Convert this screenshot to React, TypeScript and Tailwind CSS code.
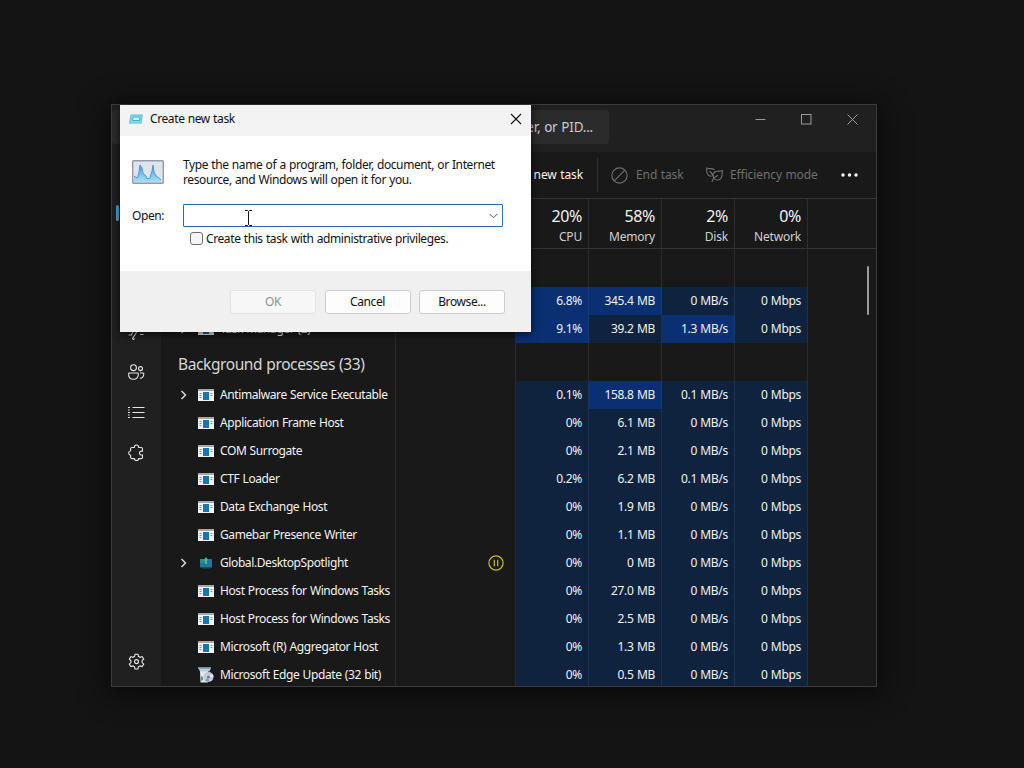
import type { ReactNode } from "react";

type Process = {
  name: string;
  icon?: "window" | "spotlight" | "installer";
  expandable?: boolean;
  suspended?: boolean;
  usage: [string, string, string, string];
  hot?: number[];
};

const apps: Process[] = [
  { name: "", expandable: true, usage: ["6.8%", "345.4 MB", "0 MB/s", "0 Mbps"], hot: [0, 1] },
  { name: "Task Manager (2)", expandable: true, usage: ["9.1%", "39.2 MB", "1.3 MB/s", "0 Mbps"], hot: [0, 2] },
];

const background: Process[] = [
  { name: "Antimalware Service Executable", expandable: true, usage: ["0.1%", "158.8 MB", "0.1 MB/s", "0 Mbps"], hot: [1] },
  { name: "Application Frame Host", usage: ["0%", "6.1 MB", "0 MB/s", "0 Mbps"] },
  { name: "COM Surrogate", usage: ["0%", "2.1 MB", "0 MB/s", "0 Mbps"] },
  { name: "CTF Loader", usage: ["0.2%", "6.2 MB", "0.1 MB/s", "0 Mbps"] },
  { name: "Data Exchange Host", usage: ["0%", "1.9 MB", "0 MB/s", "0 Mbps"] },
  { name: "Gamebar Presence Writer", usage: ["0%", "1.1 MB", "0 MB/s", "0 Mbps"] },
  { name: "Global.DesktopSpotlight", icon: "spotlight", expandable: true, suspended: true, usage: ["0%", "0 MB", "0 MB/s", "0 Mbps"] },
  { name: "Host Process for Windows Tasks", usage: ["0%", "27.0 MB", "0 MB/s", "0 Mbps"] },
  { name: "Host Process for Windows Tasks", usage: ["0%", "2.5 MB", "0 MB/s", "0 Mbps"] },
  { name: "Microsoft (R) Aggregator Host", usage: ["0%", "1.3 MB", "0 MB/s", "0 Mbps"] },
  { name: "Microsoft Edge Update (32 bit)", icon: "installer", usage: ["0%", "0.5 MB", "0 MB/s", "0 Mbps"] },
];

const columns = [
  { total: "20%", label: "CPU" },
  { total: "58%", label: "Memory" },
  { total: "2%", label: "Disk" },
  { total: "0%", label: "Network" },
];

export default function App() {
  return (
    <div className="relative w-[1024px] h-[768px] overflow-hidden bg-[#141414] font-['Noto_Sans',sans-serif] text-[12px] tracking-[-0.4px] [word-spacing:0.5px] text-[#f2f2f2]">
      <TaskManager />
      <NewTaskDialog />
    </div>
  );
}

function TaskManager() {
  return (
    <div className="absolute left-[111px] top-[104px] w-[766px] h-[583px] border border-[#3b3b3b] bg-[#191919] shadow-[0_4px_26px_6px_rgba(0,0,0,0.45)] flex flex-col overflow-hidden">
      <header className="h-[47px] shrink-0 bg-[#202020] flex items-start">
        <div className="w-[497px] h-[34px] mt-[5px] rounded bg-[#2b2b2b] flex items-center justify-end pr-4 text-[13.5px] tracking-[-0.2px] text-[#c9c9c9]">
          Type a name, publisher, or PID...
        </div>
        <div className="flex-1 flex justify-end gap-[35px] pt-[7px] pr-[18px] text-[#9a9a9a]">
          <WindowButton><path d="M0.5 7.5h10" /></WindowButton>
          <WindowButton><rect x="0.5" y="2.5" width="9.5" height="9.5" /></WindowButton>
          <WindowButton><path d="M0.5 2.500l10 10M10.500 2.500l-10 10" /></WindowButton>
        </div>
      </header>

      <div className="flex flex-1 min-h-0">
        <Sidebar />
        <main className="flex-1 min-w-0 flex flex-col">
          <Toolbar />
          <div className="h-[50px] shrink-0 flex border-b border-[#333333]">
            <div className="w-[235px] border-r border-[#2b2b2b]" />
            <div className="w-[120px] border-r border-[#2b2b2b]" />
            {columns.map((column) => (
              <div key={column.label} className="w-[73px] pr-1.5 pt-[7px] border-r border-[#2e2e2e] flex flex-col items-end">
                <span className="text-[16px] leading-[21px] tracking-[-0.4px]">{column.total}</span>
                <span className="leading-[20px] tracking-[-0.2px] text-[#cfcfcf]">{column.label}</span>
              </div>
            ))}
          </div>

          <div className="relative flex-1 overflow-hidden">
            <GroupRow title="Apps (2)" />
            {apps.map((process, i) => <ProcessRow key={i} process={process} />)}
            <GroupRow title="Background processes (33)" />
            {background.map((process, i) => <ProcessRow key={i} process={process} />)}
            <div className="absolute right-[7px] top-[17px] w-[2px] h-[49px] rounded bg-[#9b9b9b]" />
          </div>
        </main>
      </div>
    </div>
  );
}

function WindowButton({ children }: { children: ReactNode }) {
  return (
    <svg className="w-[11px] h-[13px]" viewBox="0 0 11 13" fill="none" stroke="currentColor">
      {children}
    </svg>
  );
}

function Toolbar() {
  return (
    <div className="h-[47px] shrink-0 flex items-center border-b border-[#333333] text-[12px] tracking-[-0.1px]">
      <div className="w-[437px] h-[34px] pr-[14px] border-r border-[#303030] flex items-center justify-end">Run new task</div>
      <div className="flex items-center gap-2 pl-[13px] w-[95px] text-[#6f6f6f]">
        <svg className="w-[17px] h-[17px] shrink-0" viewBox="0 0 16 16" fill="none" stroke="currentColor" strokeWidth="1.1">
          <circle cx="8" cy="8" r="7.2" />
          <path d="M3 13L13 3" />
        </svg>
        <span className="whitespace-nowrap">End task</span>
      </div>
      <div className="flex items-center gap-[7px] pl-[13px] w-[134px] text-[#6f6f6f]">
        <svg className="w-[17px] h-4 shrink-0" viewBox="0 0 17 16" fill="none" stroke="currentColor" strokeWidth="1.1">
          <path d="M8.500 2.800C6.500.9 3.500 2.300.8 1C.2 5.500 1.500 9.500 5.500 9.300M3.500 4c1.700 1 2.700 3 3.300 5" />
          <path d="M6 15c.8-3.500 3-5.500 6-6.500M8 11.500c-2-4-.5-6.700 2.800-7.200c2.200-.4 3.700.3 5.400-.8c.5 5-.7 9.500-4.800 9.500c-1.500 0-2.700-.5-3.400-1.500z" />
        </svg>
        <span className="whitespace-nowrap">Efficiency mode</span>
      </div>
      <svg className="ml-[14px] w-[17px] h-1" viewBox="0 0 17 4" fill="white">
        <circle cx="2" cy="2" r="1.7" />
        <circle cx="8.5" cy="2" r="1.7" />
        <circle cx="15" cy="2" r="1.7" />
      </svg>
    </div>
  );
}

function Sidebar() {
  return (
    <nav className="w-[49px] shrink-0 bg-[#202020] flex flex-col items-center pr-px text-[#e4e4e4] pt-[53px]">
      <div className="self-start ml-1 w-[3px] h-4 rounded bg-[#4aa3d6]" />
      <div className="h-[99px] shrink-0" />
      <div className="flex-1 flex flex-col items-center gap-[23px] pt-[4px]">
        <SideIcon>
          <path d="M0.500 11h3l3-8M6.500 14.500c-.8 1.600-2.500.8-1.500-.8L10 6M12 10.500h3.500" />
        </SideIcon>
        <SideIcon>
          <circle cx="5.500" cy="3.700" r="2.900" />
          <circle cx="12.500" cy="4.600" r="2" />
          <path d="M1.500 9h8c.6 0 .9.400.9.900c0 3.300-2 5.400-4.900 5.400S.6 13.200.6 9.900c0-.5.3-.9.900-.9zM12 9h3c.5 0 .8.300.8.800c0 2.800-1.500 4.500-4 4.400" />
        </SideIcon>
        <SideIcon>
          <path d="M4.500 3.500h12M4.500 8.500h12M4.500 13.500h12" />
          <path d="M0 3.500h2M0 8.500h2M0 13.500h2M0 6h1.500M0 11h1.500" />
        </SideIcon>
        <SideIcon>
          <path d="M4 3.500h2.300c0-1.500.8-2.500 2.200-2.500s2.200 1 2.200 2.500H13c.9 0 1.500.6 1.500 1.400v2.300c-1.900-.3-3 .5-3 1.900s1.100 2.200 3 1.900v2.200c0 .8-.6 1.400-1.500 1.400h-2.300c0 1.200-.8 2-2.200 2s-2.200-.8-2.200-2H4c-.8 0-1.400-.6-1.400-1.400v-1.900C1.300 11.200.7 10.300.7 9s.6-2.100 1.900-2.300V4.900C2.600 4.100 3.200 3.500 4 3.500z" />
        </SideIcon>
      </div>
      <div className="pb-4">
        <SideIcon>
          <path d="M7 1.200h3l.4 2.100 1.700 1 2.100-.7 1.500 2.500-1.600 1.500v2l1.600 1.500-1.500 2.500-2.100-.7-1.700 1-.4 2.100H7l-.4-2.100-1.700-1-2.100.7-1.500-2.500 1.600-1.500v-2L1.300 6.100l1.500-2.500 2.100.7 1.700-1z" />
          <circle cx="8.500" cy="8.600" r="2" />
        </SideIcon>
      </div>
    </nav>
  );
}

function SideIcon({ children }: { children: ReactNode }) {
  return (
    <svg className="w-[17px] h-[17px]" viewBox="0 0 17 17" fill="none" stroke="currentColor" strokeWidth="1.1">
      {children}
    </svg>
  );
}

function GroupRow({ title }: { title: string }) {
  return (
    <div className="h-[38px] flex">
      <div className="w-[235px] pl-[17px] pt-[11px] border-r border-[#2b2b2b] text-[15.5px] leading-[21px] tracking-[-0.4px] text-[#d6d6d6] whitespace-nowrap">{title}</div>
      <div className="w-[120px] border-r border-[#2b2b2b]" />
      {columns.map((column) => <div key={column.label} className="w-[73px] border-r border-[#2b2b2b]" />)}
    </div>
  );
}

function ProcessRow({ process }: { process: Process }) {
  return (
    <div className="h-[28px] flex">
      <div className="w-[235px] pl-[17px] flex items-center border-r border-[#2b2b2b]">
        <div className="w-[20px] shrink-0">
          {process.expandable && (
            <svg className="w-[11px] h-[10px]" viewBox="0 0 11 10" fill="none" stroke="#d8d8d8" strokeWidth="1.5">
              <path d="M3.500 1l4 4-4 4" />
            </svg>
          )}
        </div>
        <ProcessIcon kind={process.icon ?? "window"} />
        <span className="ml-1.5 whitespace-nowrap">{process.name}</span>
      </div>
      <div className="w-[120px] pr-[11px] border-r border-[#2b2b2b] flex items-center justify-end">
        {process.suspended && (
          <svg className="w-4 h-4" viewBox="0 0 16 16" fill="none" stroke="#c9bd1c" strokeWidth="1.2">
            <circle cx="8" cy="8" r="7.100" />
            <path d="M6.300 4.800v6.400M9.700 4.800v6.400" />
          </svg>
        )}
      </div>
      {process.usage.map((value, i) => (
        <div
          key={i}
          className={`w-[73px] pr-1.5 flex items-center justify-end border-r tracking-[-0.3px] ${
            process.hot?.includes(i) ? "bg-[#0a2f72] border-[#173a72]" : "bg-[#10233e] border-[#213149]"
          }`}
        >
          {value}
        </div>
      ))}
    </div>
  );
}

function ProcessIcon({ kind }: { kind: "window" | "spotlight" | "installer" }) {
  if (kind === "spotlight") {
    return (
      <svg className="w-4 h-4 shrink-0" viewBox="0 0 16 16">
        <rect x="2" y="4" width="12" height="8.500" rx="0.500" fill="#1f7899" />
        <path d="M2 4h5v4H2z" fill="#2a8a97" />
        <path d="M4 12.500h8v1H4z" fill="#14536f" />
        <path d="M8 2l2.500 3.500H9V9H7V5.500H5.500z" fill="#3cc08f" />
      </svg>
    );
  }
  if (kind === "installer") {
    return (
      <svg className="w-4 h-4 shrink-0" viewBox="0 0 16 16">
        <path d="M2 4h8v11.500H2.500z" fill="#e0e8ea" />
        <path d="M0 0.500h13l-1.500 4H2z" fill="#b9ced9" />
        <path d="M0 0.500h13v1.500H0z" fill="#8ba7b5" />
        <path d="M3 9l2 1v3l-2 1z" fill="#5aa865" />
        <circle cx="10.500" cy="10" r="5" fill="#c3c8dc" />
        <path d="M10.500 10l-3.500 3.500a5 5 0 0 0 3.500 1.500z" fill="#8f94bf" />
        <path d="M10.500 10l4-3a5 5 0 0 1 1 3z" fill="#eef0f5" />
        <circle cx="10.500" cy="10" r="1.300" fill="#68708c" />
      </svg>
    );
  }
  return (
    <svg className="w-4 h-4 shrink-0" viewBox="0 0 16 16">
      <rect y="2" width="16" height="12" fill="#f1f4f6" />
      <rect y="2" width="16" height="2" fill="#a3a9ad" />
      <rect x="5" y="5" width="6" height="8" fill="#1676b4" />
      <path d="M1.500 6.500h2M1.500 8.500h2M1.500 10.500h2" stroke="#5f91af" />
      <path d="M12.500 6.500h2M12.500 8.500h2" stroke="#6f9bb5" />
    </svg>
  );
}

function NewTaskDialog() {
  return (
    <div className="absolute left-[120px] top-[105px] w-[411px] h-[227px] bg-white text-[#111111] flex flex-col shadow-[0_2px_8px_rgba(0,0,0,0.7)]">
      <div className="h-[31px] bg-[#f3f3f3] flex items-center pl-2 pr-[9px] pb-[3px]">
        <svg className="w-4 h-4" viewBox="0 0 16 16">
          <path d="M2.500 3.500h12.300l-1.300 9H1z" fill="#55bde0" />
          <path d="M3.300 4.500h10.300l-1 7H2.200z" fill="#8bdcf1" />
          <path d="M5 6h7l-.5 3.500h-7z" fill="#ccf4fb" stroke="#2899c6" strokeWidth="0.800" />
        </svg>
        <span className="ml-1.5 flex-1">Create new task</span>
        <svg className="w-3 h-3" viewBox="0 0 12 12" fill="none" stroke="#111111" strokeWidth="1.100">
          <path d="M1 1l10 10M11 1L1 11" />
        </svg>
      </div>

      <div className="h-[135px] pl-3 pt-[20px]">
        <div className="flex h-[48px]">
          <svg className="w-8 h-8" viewBox="0 0 32 32">
            <defs>
              <linearGradient id="graph" x1="0" y1="0" x2="0" y2="1">
                <stop offset="0" stopColor="#4a9ed6" />
                <stop offset="1" stopColor="#a5e0fa" />
              </linearGradient>
            </defs>
            <rect x="0.700" y="4.700" width="30.600" height="22.600" rx="1" fill="#dfe4ea" stroke="#929aac" strokeWidth="1.400" />
            <path d="M2 26v-6l3 2 1-2 1-4 1-7 2 3 1 5 3 3 1 3 3-1 1-4 1-3 1-6 1 7 2 4 3 2 2 2v2z" fill="url(#graph)" />
            <path d="M2 20l3 2 1-2 1-4 1-7 2 3 1 5 3 3 1 3 3-1 1-4 1-3 1-6 1 7 2 4 3 2 2 2" fill="none" stroke="#4394cb" strokeWidth="0.900" />
          </svg>
          <p className="ml-[19px] pt-px leading-[15px] whitespace-nowrap">
            Type the name of a program, folder, document, or Internet
            <br />
            resource, and Windows will open it for you.
          </p>
        </div>
        <div className="flex items-center h-[23px]">
          <span className="w-[51px]">Open:</span>
          <div className="relative w-[320px] h-[23px] border border-[#296f9f] rounded-[1px] flex items-center justify-end pr-1">
            <svg className="w-[9px] h-[6px]" viewBox="0 0 9 6" fill="none" stroke="#555555">
              <path d="M0.500 0.800l4 4 4-4" />
            </svg>
            {/* Text cursor */}
            <svg className="absolute left-[60px] top-[5px] w-[9px] h-[16px]" viewBox="0 0 9 16" fill="none" stroke="#111111">
              <path d="M1 .5h2.500l1 1 1-1H8M4.500 1.500v13M1 15.500h2.500l1-1 1 1H8" />
            </svg>
          </div>
        </div>
        <label className="flex items-center gap-[3px] ml-[58px] mt-[5px] h-[14px]">
          <span className="w-[13px] h-[13px] -mt-px border border-[#6c6c72] rounded-[3px] bg-[#f6f6f8]" />
          Create this task with administrative privileges.
        </label>
      </div>

      <div className="flex-1 bg-[#f0f0f0] flex justify-end gap-[8.5px] pt-[19px] pr-[26px]">
        <DialogButton label="OK" disabled />
        <DialogButton label="Cancel" />
        <DialogButton label="Browse..." />
      </div>
    </div>
  );
}

function DialogButton({ label, disabled = false }: { label: string; disabled?: boolean }) {
  return (
    <button
      disabled={disabled}
      className={`w-[86px] h-[24px] rounded-[3px] border ${
        disabled ? "bg-[#f7f7f7] border-[#e4e4e4] text-[#8f8f8f]" : "bg-[#fdfdfd] border-[#cccccc]"
      }`}
    >
      {label}
    </button>
  );
}
